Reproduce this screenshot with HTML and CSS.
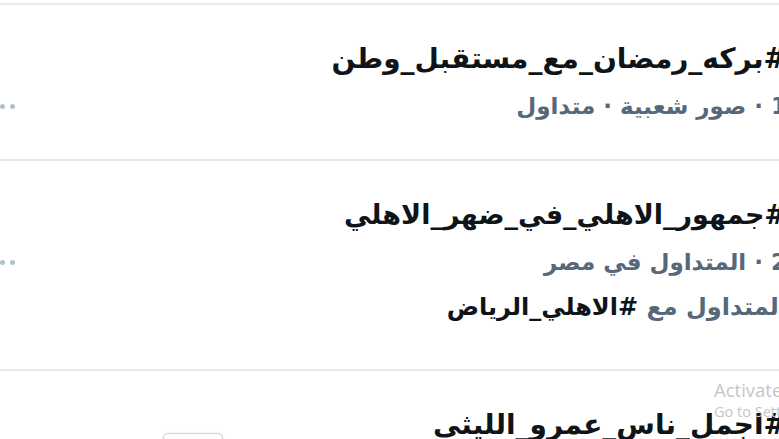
FILE: index.html
```html
<!DOCTYPE html>
<html lang="ar">
<head>
<meta charset="utf-8">
<link rel="stylesheet" href="styles.css">
</head>
<body>
<div class="page">
  <div class="list" dir="rtl">
    <div class="trend">
      <div class="name">#بركه_رمضان_مع_مستقبل_وطن</div>
      <div class="meta">
        <span class="meta-text">1 · صور شعبية · متداول</span>
        <span class="more"><i></i><i></i><i></i></span>
      </div>
    </div>
    <div class="trend trend-tall">
      <div class="name">#جمهور_الاهلي_في_ضهر_الاهلي</div>
      <div class="meta">
        <span class="meta-text">2 · المتداول في مصر</span>
        <span class="more"><i></i><i></i><i></i></span>
      </div>
      <div class="related">المتداول مع <b>#الاهلي_الرياض</b></div>
    </div>
    <div class="trend">
      <div class="name">#اجمل_ناس_عمرو_الليثى</div>
    </div>
  </div>
  <div class="watermark">
    <div class="wm-title">Activate</div>
    <div class="wm-sub">Go to Settings</div>
  </div>
  <div class="popup"></div>
</div>
</body>
</html>
```
FILE: styles.css
```css
html, body {
  margin: 0;
  padding: 0;
  background: #ffffff;
}
body {
  width: 779px;
  height: 439px;
  overflow: hidden;
  font-family: "DejaVu Sans", sans-serif;
}
.page {
  position: relative;
  width: 779px;
  height: 439px;
  overflow: hidden;
  padding-top: 3px;
  box-sizing: border-box;
}
.list {
  margin-right: -8px;
  margin-left: 0;
}
.trend {
  border-top: 2px solid #e9e9e9;
  padding: 30px 0 30px 0;
}
.trend-tall {
  padding-bottom: 40px;
}
.name {
  font-size: 28px;
  font-weight: bold;
  line-height: 48px;
  color: #0f1419;
  white-space: nowrap;
}
.trend-tall .name {
  font-size: 27px;
}
.meta {
  display: flex;
  align-items: center;
  line-height: 46px;
  font-size: 23px;
  font-weight: bold;
  color: #56687a;
  white-space: nowrap;
}
.more {
  margin-right: auto;
  margin-left: -10px;
  display: flex;
  gap: 5px;
  direction: ltr;
}
.more i {
  display: block;
  width: 5px;
  height: 5px;
  border-radius: 50%;
  background: #b3c0ca;
}
.related {
  line-height: 44px;
  font-size: 24px;
  font-weight: bold;
  color: #56687a;
  white-space: nowrap;
}
.related b {
  color: #0f1419;
}
.watermark {
  position: absolute;
  left: 714px;
  top: 378px;
  color: #c6c6c6;
  font-family: "Open Sans", sans-serif;
  white-space: nowrap;
}
.wm-title {
  font-size: 18.5px;
  line-height: 24px;
}
.wm-sub {
  font-size: 14.5px;
  line-height: 20px;
}
.popup {
  position: absolute;
  left: 163px;
  top: 433px;
  width: 58px;
  height: 20px;
  border: 1px solid #d2d2d2;
  border-radius: 5px;
  background: #fff;
  box-shadow: 0 0 2px rgba(0,0,0,0.12);
}
```
